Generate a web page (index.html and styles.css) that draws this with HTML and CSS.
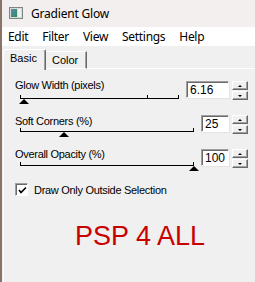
FILE: index.html
```html
<!DOCTYPE html>
<html>
<head>
<meta charset="utf-8">
<link rel="stylesheet" href="styles.css">
</head>
<body>
<div class="window">
  <div class="titlebar">
    <svg class="appicon" width="14" height="12" viewBox="0 0 14 12">
      <defs>
        <linearGradient id="g" x1="0" y1="0" x2="1" y2="1">
          <stop offset="0" stop-color="#5a8fb0"/>
          <stop offset="1" stop-color="#2f8a5a"/>
        </linearGradient>
      </defs>
      <rect x="0.5" y="0.5" width="13" height="11" fill="#d8dcdc" stroke="#7d8487"/>
      <rect x="2" y="2" width="6" height="8" fill="url(#g)"/>
      <rect x="9" y="2" width="3" height="8" fill="#eef1f1"/>
    </svg>
    <span class="title">Gradient Glow</span>
  </div>
  <div class="menubar">
    <span>Edit</span><span>Filter</span><span>View</span><span>Settings</span><span>Help</span>
  </div>
  <div class="tabs">
    <div class="tab active">Basic</div>
    <div class="tab">Color</div>
    <div class="tabline"></div>
  </div>
  <div class="panel">
    <div class="row r1">
      <div class="left">
        <div class="label">Glow Width (pixels)</div>
        <div class="slider">
          <div class="track"></div>
          <div class="tick" style="left:80%"></div>
          <div class="thumb" style="left:2.8%"></div>
        </div>
      </div>
      <div class="field wide">6.16</div>
      <div class="spin"><div class="sb"><i class="up"></i></div><div class="sb"><i class="down"></i></div></div>
    </div>
    <div class="row r2">
      <div class="left">
        <div class="label">Soft Corners (%)</div>
        <div class="slider">
          <div class="track"></div>
          <div class="thumb" style="left:25%"></div>
        </div>
      </div>
      <div class="field">25</div>
      <div class="spin"><div class="sb"><i class="up"></i></div><div class="sb"><i class="down"></i></div></div>
    </div>
    <div class="row r3">
      <div class="left">
        <div class="label">Overall Opacity (%)</div>
        <div class="slider">
          <div class="track"></div>
          <div class="thumb" style="left:100%"></div>
        </div>
      </div>
      <div class="field">100</div>
      <div class="spin"><div class="sb"><i class="up"></i></div><div class="sb"><i class="down"></i></div></div>
    </div>
    <label class="check">
      <span class="box"><svg width="9" height="9" viewBox="0 0 9 9"><path d="M1 4 L3 6.5 L8 1.5" fill="none" stroke="#000" stroke-width="1.6"/></svg></span>
      <span>Draw Only Outside Selection</span>
    </label>
    <div class="brand">PSP 4 ALL</div>
  </div>
</div>
</body>
</html>
```
FILE: styles.css
```css
html, body {
  margin: 0;
  padding: 0;
}
body {
  width: 255px;
  height: 282px;
  overflow: hidden;
  background: #f0f0f0;
}
.window {
  height: 282px;
  border-left: 2px solid #8a7468;
  display: flex;
  flex-direction: column;
  background: #f0f0f0;
}
.titlebar {
  height: 27px;
  background: #f4efef;
  display: flex;
  align-items: center;
  padding-left: 7px;
  gap: 8px;
}
.appicon { display: block; margin-top: -1px; }
.title {
  font-family: "Noto Sans", sans-serif;
  font-size: 12px;
  color: #000;
  letter-spacing: -0.2px;
}
.menubar {
  height: 19px;
  background: #fff;
  display: flex;
  align-items: center;
  gap: 14px;
  padding-left: 6px;
  font-family: "Noto Sans", sans-serif;
  font-size: 12px;
  letter-spacing: -0.3px;
}
.tabs {
  height: 23px;
  display: flex;
  align-items: flex-end;
  padding-left: 1px;
  font-family: "Liberation Sans", Arial, sans-serif;
  font-size: 11px;
}
.tab {
  height: 16px;
  padding: 0 6px 0 6px;
  line-height: 16px;
  border-top: 1px solid #fff;
  border-left: 1px solid #fff;
  border-right: 1px solid #696969;
  box-shadow: inset -1px 0 #a0a0a0;
  border-bottom: 1px solid #fff;
  box-sizing: content-box;
}
.tab.active {
  height: 20px;
  line-height: 16px;
  padding: 0 9px 0 6px;
  border-bottom: none;
  border-radius: 2px 2px 0 0;
  width: 26px;
  margin-bottom: -1px;
}
.tab:not(.active) {
  width: 28px;
  border-left: none;
  padding-top: 0;
  margin-bottom: 0;
}
.tabline {
  flex: 1;
  border-bottom: 1px solid #fff;
}
.panel {
  flex: 1;
  display: flex;
  flex-direction: column;
  padding-left: 11px;
  padding-right: 7px;
  font-family: "Liberation Sans", Arial, sans-serif;
  font-size: 11px;
  letter-spacing: -0.3px;
  color: #000;
  border-left: 1px solid #fff;
  margin-left: 1px;
}
.row {
  display: flex;
  align-items: flex-start;
}
.r1 { margin-top: 10px; height: 36px; }
.r2 { height: 33px; }
.r3 { height: 35px; }
.left {
  flex: 1;
  display: flex;
  flex-direction: column;
}
.label {
  line-height: 13px;
  height: 13px;
}
.slider {
  position: relative;
  height: 14px;
  margin-left: 5px;
  margin-right: 7px;
}
.track {
  position: absolute;
  left: 0;
  right: 0;
  height: 3px;
  border: 1px solid #000;
  border-top: none;
}
.r1 .track { top: 3px; }
.r2 .track { top: 0px; }
.r3 .track { top: 1px; }
.tick {
  position: absolute;
  top: 3px;
  width: 1px;
  height: 3px;
  background: #000;
}
.thumb {
  position: absolute;
  width: 0;
  height: 0;
  margin-left: -5px;
  border-left: 5px solid transparent;
  border-right: 5px solid transparent;
  border-bottom: 5px solid #000;
}
.r1 .thumb { top: 7px; }
.r2 .thumb { top: 4px; }
.r3 .thumb { top: 5px; }
.field {
  width: 23px;
  height: 15px;
  background: #fff;
  border: 1px solid;
  border-color: #a0a0a0 #fff #fff #a0a0a0;
  box-shadow: inset 1px 1px #696969, 1px 1px #e3e3e3;
  padding-left: 3px;
  line-height: 16px;
  font-size: 12px;
  letter-spacing: 0;
}
.field.wide { width: 38px; }
.r1 .field, .r1 .spin { margin-top: 2px; }
.r2 .field, .r2 .spin { margin-top: 0px; }
.r3 .field, .r3 .spin { margin-top: 1px; }
.spin {
  margin-left: 3px;
  display: flex;
  flex-direction: column;
  gap: 1px;
}
.sb {
  width: 14px;
  height: 7px;
  background: #f0f0f0;
  border: 1px solid;
  border-color: #fff #696969 #696969 #fff;
  box-shadow: inset -1px -1px #a0a0a0;
  display: flex;
  align-items: center;
  justify-content: center;
}
.sb i {
  display: block;
  width: 0;
  height: 0;
  border-left: 2px solid transparent;
  border-right: 2px solid transparent;
}
.sb .up { border-bottom: 2px solid #000; }
.sb .down { border-top: 2px solid #000; }
.check {
  display: flex;
  align-items: center;
  gap: 6px;
  height: 13px;
}
.box {
  width: 11px;
  height: 11px;
  background: #fff;
  border: 1px solid;
  border-color: #a0a0a0 #fff #fff #a0a0a0;
  box-shadow: inset 1px 1px #696969;
  display: flex;
  align-items: center;
  justify-content: center;
}
.box svg { display: block; margin: 1px 0 0 1px; }
.brand {
  margin-top: 25px;
  padding-left: 60px;
  font-family: "Liberation Sans", Arial, sans-serif;
  font-size: 27px;
  letter-spacing: 0;
  line-height: 30px;
  color: #c80000;
}
```
